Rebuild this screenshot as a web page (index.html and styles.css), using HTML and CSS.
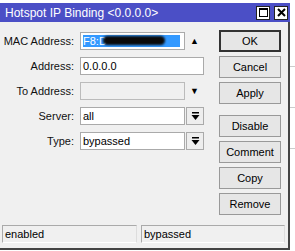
FILE: index.html
```html
<!DOCTYPE html>
<html lang="en">
<head>
    <meta charset="UTF-8">
    <title>Hotspot IP Binding</title>
    <link rel="stylesheet" href="styles.css">
</head>
<body>
    <div class="desk">
        <div class="window">
            <div class="titlebar">
                <span class="title">Hotspot IP Binding &lt;0.0.0.0&gt;</span>
                <span class="tbtn">
                    <svg width="11" height="11" viewBox="0 0 11 11"><rect x="1.5" y="1.5" width="8" height="8" fill="none" stroke="#000" stroke-width="1"/><line x1="1" y1="2" x2="10" y2="2" stroke="#000" stroke-width="2"/></svg>
                </span>
                <span class="tbtn">
                    <svg width="11" height="11" viewBox="0 0 11 11"><path d="M2 2 L9 9 M9 2 L2 9" stroke="#000" stroke-width="2"/></svg>
                </span>
            </div>
            <div class="content">
                <div class="form">
                    <div class="row">
                        <label>MAC Address:</label>
                        <div class="field short"><span class="sel">F8:D<span class="blot"></span></span></div>
                        <span class="arrow">&#9650;</span>
                    </div>
                    <div class="row">
                        <label>Address:</label>
                        <div class="field">0.0.0.0</div>
                    </div>
                    <div class="row">
                        <label>To Address:</label>
                        <div class="field short disabled"></div>
                        <span class="arrow">&#9660;</span>
                    </div>
                    <div class="row">
                        <label>Server:</label>
                        <div class="field short">all</div>
                        <span class="drop"><svg width="9" height="9" viewBox="0 0 9 9"><rect x="1" y="0" width="7" height="1.5" fill="#000"/><path d="M0.5 3 H8.5 L4.5 8 Z" fill="#000"/></svg></span>
                    </div>
                    <div class="row">
                        <label>Type:</label>
                        <div class="field short">bypassed</div>
                        <span class="drop"><svg width="9" height="9" viewBox="0 0 9 9"><rect x="1" y="0" width="7" height="1.5" fill="#000"/><path d="M0.5 3 H8.5 L4.5 8 Z" fill="#000"/></svg></span>
                    </div>
                </div>
                <div class="buttons">
                    <button class="default">OK</button>
                    <button>Cancel</button>
                    <button>Apply</button>
                    <button class="sep">Disable</button>
                    <button>Comment</button>
                    <button>Copy</button>
                    <button>Remove</button>
                </div>
            </div>
            <div class="statusbar">
                <div class="status first">enabled</div>
                <div class="status">bypassed</div>
            </div>
        </div>
        <div class="behind">
            <div class="line"></div>
            <div class="line"></div>
            <div class="line"></div>
        </div>
    </div>
</body>
</html>
```

FILE: styles.css
```css
body {
    margin: 0;
    background: #fff;
    font-family: "Liberation Sans", Arial, sans-serif;
    font-size: 11px;
}
.desk {
    display: flex;
    width: 295px;
    height: 251px;
    overflow: hidden;
}
.window {
    margin-top: 3px;
    width: 288px;
    height: 245px;
    background: #f0f0f0;
    border-right: 2px solid #444;
    border-bottom: 2px solid #444;
    display: flex;
    flex-direction: column;
    flex-shrink: 0;
}
.titlebar {
    height: 19px;
    background: #4b4fc6;
    color: #fff;
    display: flex;
    align-items: center;
    padding-left: 5px;
    padding-right: 2px;
    margin-right: -2px;
    font-size: 12px;
}
.title {
    flex: 1;
}
.tbtn {
    width: 12px;
    height: 12px;
    background: #fff;
    border: 1px solid #222;
    margin-left: 4px;
    display: flex;
    align-items: center;
    justify-content: center;
}
.content {
    display: flex;
    padding-top: 8px;
    flex: 1;
}
.form {
    display: flex;
    flex-direction: column;
    gap: 7px;
    padding-top: 2px;
    width: 219px;
}
.row {
    display: flex;
    align-items: center;
    height: 18px;
}
.row label {
    width: 74px;
    text-align: right;
    padding-right: 6px;
    color: #111;
}
.field {
    width: 120px;
    height: 16px;
    border: 1px solid #aaa;
    background: #fff;
    line-height: 16px;
    padding-left: 2px;
    color: #000;
    box-sizing: content-box;
}
.field.short {
    width: 101px;
}
.field.disabled {
    background: #f0f0f0;
    border-color: #bbb;
}
.sel {
    display: inline-block;
    position: relative;
    width: 97px;
    height: 12px;
    line-height: 12px;
    margin-top: 2px;
    background: #3399ff;
    color: #fff;
    vertical-align: top;
}
.blot {
    position: absolute;
    left: 20px;
    top: 1px;
    width: 62px;
    height: 9px;
    background: #0a0a0a;
    border-radius: 5px;
    filter: blur(1.2px);
}
.arrow {
    width: 19px;
    text-align: center;
    font-size: 9px;
    color: #000;
}
.drop {
    width: 16px;
    height: 16px;
    margin-left: 1px;
    border: 1px solid #aaa;
    background: #eee;
    display: flex;
    align-items: center;
    justify-content: center;
}
.buttons {
    display: flex;
    flex-direction: column;
    gap: 4px;
}
.buttons button {
    width: 62px;
    height: 22px;
    border: 1px solid #999;
    background: #e6e6e6;
    font-family: "Liberation Sans", Arial, sans-serif;
    font-size: 11px;
    color: #000;
    padding: 0;
}
.buttons button.default {
    border: 2px solid #333;
}
.buttons button.sep {
    margin-top: 7px;
}
.statusbar {
    display: flex;
    gap: 4px;
    padding: 0 3px 5px 2px;
}
.status {
    flex: 1;
    height: 16px;
    line-height: 16px;
    padding-left: 2px;
    border-top: 1px solid #aaa;
    border-left: 1px solid #aaa;
    border-right: 1px solid #ddd;
    border-bottom: 1px solid #fff;
    color: #000;
}
.status.first {
    flex: 0 0 131px;
}
.behind {
    flex: 1;
    display: flex;
    flex-direction: column;
    gap: 40px;
    padding-top: 66px;
}
.line {
    height: 1px;
    background: #ccc;
}
```
